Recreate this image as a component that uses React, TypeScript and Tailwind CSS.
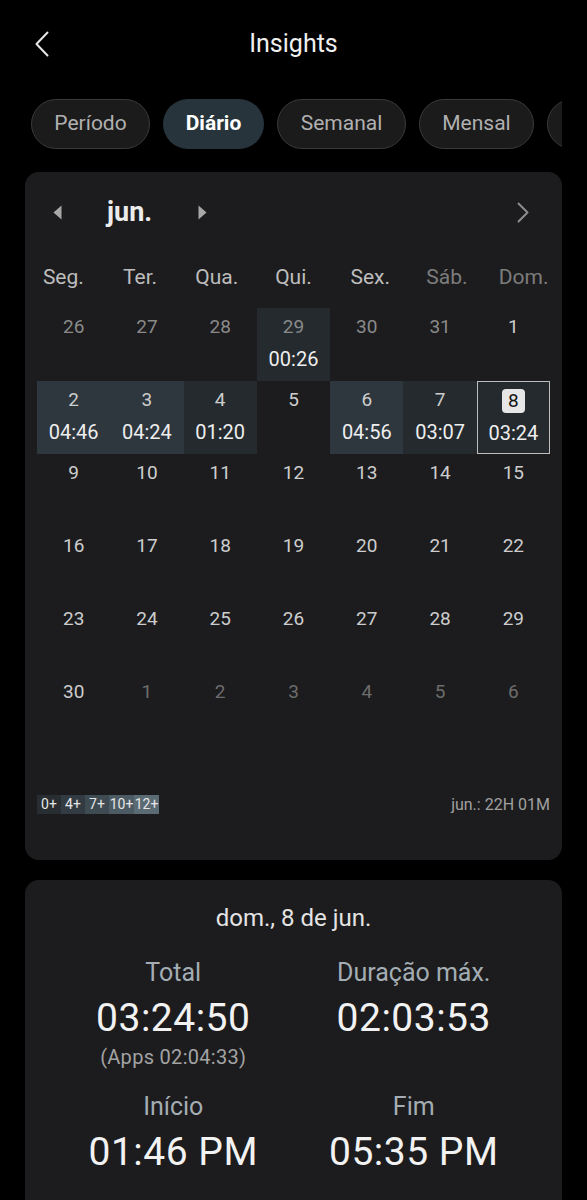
import React from 'react';

// ---------- Types ----------
type Day = {
  d: number;
  kind?: 'prev' | 'next' | 'cur';
  time?: string;
  level?: 0 | 1;
  selected?: boolean;
};

// ---------- Data ----------
// last pill is only peeking in from the right edge
const TABS = [
  { label: 'Período', w: 'w-[119px]' },
  { label: 'Diário', w: 'w-[101px]', active: true },
  { label: 'Semanal', w: 'w-[129px]' },
  { label: 'Mensal', w: 'w-[115px]' },
  { label: '', w: 'w-[100px]' },
];

const WEEKDAYS = [
  { label: 'Seg.' },
  { label: 'Ter.' },
  { label: 'Qua.' },
  { label: 'Qui.' },
  { label: 'Sex.' },
  { label: 'Sáb.', weekend: true },
  { label: 'Dom.', weekend: true },
];

const WEEKS: Day[][] = [
  [
    { d: 26, kind: 'prev' },
    { d: 27, kind: 'prev' },
    { d: 28, kind: 'prev' },
    { d: 29, kind: 'prev', time: '00:26', level: 0 },
    { d: 30, kind: 'prev' },
    { d: 31, kind: 'prev' },
    { d: 1 },
  ],
  [
    { d: 2, time: '04:46', level: 1 },
    { d: 3, time: '04:24', level: 1 },
    { d: 4, time: '01:20', level: 0 },
    { d: 5 },
    { d: 6, time: '04:56', level: 1 },
    { d: 7, time: '03:07', level: 0 },
    { d: 8, time: '03:24', level: 0, selected: true },
  ],
  [9, 10, 11, 12, 13, 14, 15].map((d) => ({ d })),
  [16, 17, 18, 19, 20, 21, 22].map((d) => ({ d })),
  [23, 24, 25, 26, 27, 28, 29].map((d) => ({ d })),
  [
    { d: 30 },
    { d: 1, kind: 'next' },
    { d: 2, kind: 'next' },
    { d: 3, kind: 'next' },
    { d: 4, kind: 'next' },
    { d: 5, kind: 'next' },
    { d: 6, kind: 'next' },
  ],
];

const LEGEND = [
  { label: '0+', bg: 'bg-[#272d31]', w: 'w-[24px]' },
  { label: '4+', bg: 'bg-[#323b42]', w: 'w-[24px]' },
  { label: '7+', bg: 'bg-[#3f4b53]', w: 'w-[24px]' },
  { label: '10+', bg: 'bg-[#4c5a63]', w: 'w-[25px]' },
  { label: '12+', bg: 'bg-[#5b6b74]', w: 'w-[25px]' },
];

// ---------- Helpers ----------
function levelBg(level?: 0 | 1) {
  if (level === 1) return 'bg-[#2e373e]';
  if (level === 0) return 'bg-[#242a2e]';
  return '';
}

function numColor(kind?: Day['kind']) {
  if (kind === 'prev') return 'text-[#8a8a8a]';
  if (kind === 'next') return 'text-[#6c6c6c]';
  return 'text-[#cdcdcd]';
}

// ---------- Pieces ----------
function DayCell({ day }: { day: Day }) {
  return (
    <div
      className={[
        'h-[73px] flex flex-col items-center',
        levelBg(day.level),
        day.selected ? 'border-[1.5px] border-[#bdbdbd]' : '',
      ].join(' ')}
    >
      {day.selected ? (
        <div className="mt-[7px] h-[24px] w-[23px] rounded-[4px] bg-[#e6e6e6] flex items-center justify-center text-[19px] leading-[24px] text-[#141414]">
          {day.d}
        </div>
      ) : (
        <div className={`mt-[7px] text-[19px] leading-[24px] ${numColor(day.kind)}`}>{day.d}</div>
      )}
      {day.time ? (
        <div className="mt-[8px] text-[20px] leading-[24px] text-[#eeeeee]">{day.time}</div>
      ) : null}
    </div>
  );
}

function Stat({ label, value, sub }: { label: string; value: string; sub?: string }) {
  return (
    <div className="flex flex-col items-center">
      <div className="text-[25px] leading-[30px] text-[#a3adb3]">{label}</div>
      <div className="mt-[8px] text-[39px] leading-[44px] text-[#f2f2f2] tracking-[0.5px]">{value}</div>
      {sub ? <div className="mt-[5px] text-[20px] leading-[24px] text-[#a3a3a3] tracking-[0.3px]">{sub}</div> : null}
    </div>
  );
}

// ---------- Component ----------
export default function App() {
  return (
    <div
      className="min-h-[1200px] w-[587px] bg-black overflow-hidden"
      style={{ fontFamily: 'Roboto, "Noto Sans", "Liberation Sans", sans-serif' }}
    >
      {/* Header */}
      <div className="h-[88px] grid grid-cols-[1fr_auto_1fr] items-center">
        <div className="pl-[35px]">
          <svg width="14" height="26" viewBox="0 0 14 26" fill="none">
            <polyline points="12.5,1.5 1.5,13 12.5,24.5" stroke="#e6e6e6" strokeWidth="2" strokeLinecap="round" strokeLinejoin="round" />
          </svg>
        </div>
        <div className="text-[25px] text-[#f0f0f0]">Insights</div>
        <div />
      </div>

      {/* Tabs */}
      <div className="mt-[11px] ml-[31px] w-[531px] overflow-hidden">
        <div className="flex gap-[13px]">
          {TABS.map((t, i) => (
            <div
              key={i}
              className={[
                'h-[50px] shrink-0 rounded-full flex items-center justify-center text-[21px]',
                t.w,
                t.active
                  ? 'bg-[#27343b] text-white font-bold'
                  : 'bg-[#1b1b1b] border-[1.5px] border-[#3a3a3a] text-[#b0b0b0]',
              ].join(' ')}
            >
              {t.label}
            </div>
          ))}
        </div>
      </div>

      {/* Calendar card */}
      <div className="mt-[23px] mx-[25px] rounded-[14px] bg-[#1c1c1e] pt-[14px] pb-[46px]">
        {/* Month row */}
        <div className="h-[52px] flex items-center">
          <svg className="ml-[28px]" width="9" height="15" viewBox="0 0 9 15">
            <polygon points="8.5,0.5 0.5,7.5 8.5,14.5" fill="#a8a8a8" />
          </svg>
          <div className="ml-[45px] text-[27px] font-bold text-[#ececec]">jun.</div>
          <svg className="ml-[46px]" width="9" height="15" viewBox="0 0 9 15">
            <polygon points="0.5,0.5 8.5,7.5 0.5,14.5" fill="#a8a8a8" />
          </svg>
          <div className="flex-1" />
          <svg className="mr-[33px]" width="12" height="21" viewBox="0 0 12 21" fill="none">
            <polyline points="1.5,1.5 10.5,10.5 1.5,19.5" stroke="#8c8c8c" strokeWidth="2" strokeLinecap="round" strokeLinejoin="round" />
          </svg>
        </div>

        {/* Weekdays */}
        <div className="mt-[15px] h-[50px] grid grid-cols-7 items-center">
          {WEEKDAYS.map((w) => (
            <div
              key={w.label}
              className={`text-center text-[21px] ${w.weekend ? 'text-[#7c7c7c]' : 'text-[#bdbdbd]'}`}
            >
              {w.label}
            </div>
          ))}
        </div>

        {/* Days */}
        <div className="mt-[5px] mx-[12px] grid grid-cols-7">
          {WEEKS.flat().map((day, i) => (
            <DayCell key={i} day={day} />
          ))}
        </div>

        {/* Legend */}
        <div className="mt-[49px] mx-[12px] h-[19px] flex items-center justify-between">
          <div className="flex">
            {LEGEND.map((l) => (
              <div
                key={l.label}
                className={`h-[19px] ${l.w} ${l.bg} flex items-center justify-center text-[14px] leading-[19px] text-[#e6e6e6]`}
              >
                {l.label}
              </div>
            ))}
          </div>
          <div className="text-[16px] leading-[19px] text-[#a0a0a0]">jun.: 22H 01M</div>
        </div>
      </div>

      {/* Day details */}
      <div className="mt-[20px] mx-[25px] rounded-t-[14px] bg-[#1c1c1e] pt-[25px] pb-[60px] px-[28px]">
        <div className="text-center text-[24px] leading-[26px] text-[#e4e4e4]">dom., 8 de jun.</div>
        <div className="mt-[27px] grid grid-cols-2 gap-y-[23px]">
          <Stat label="Total" value="03:24:50" sub="(Apps 02:04:33)" />
          <Stat label="Duração máx." value="02:03:53" />
          <Stat label="Início" value="01:46 PM" />
          <Stat label="Fim" value="05:35 PM" />
        </div>
      </div>
    </div>
  );
}
